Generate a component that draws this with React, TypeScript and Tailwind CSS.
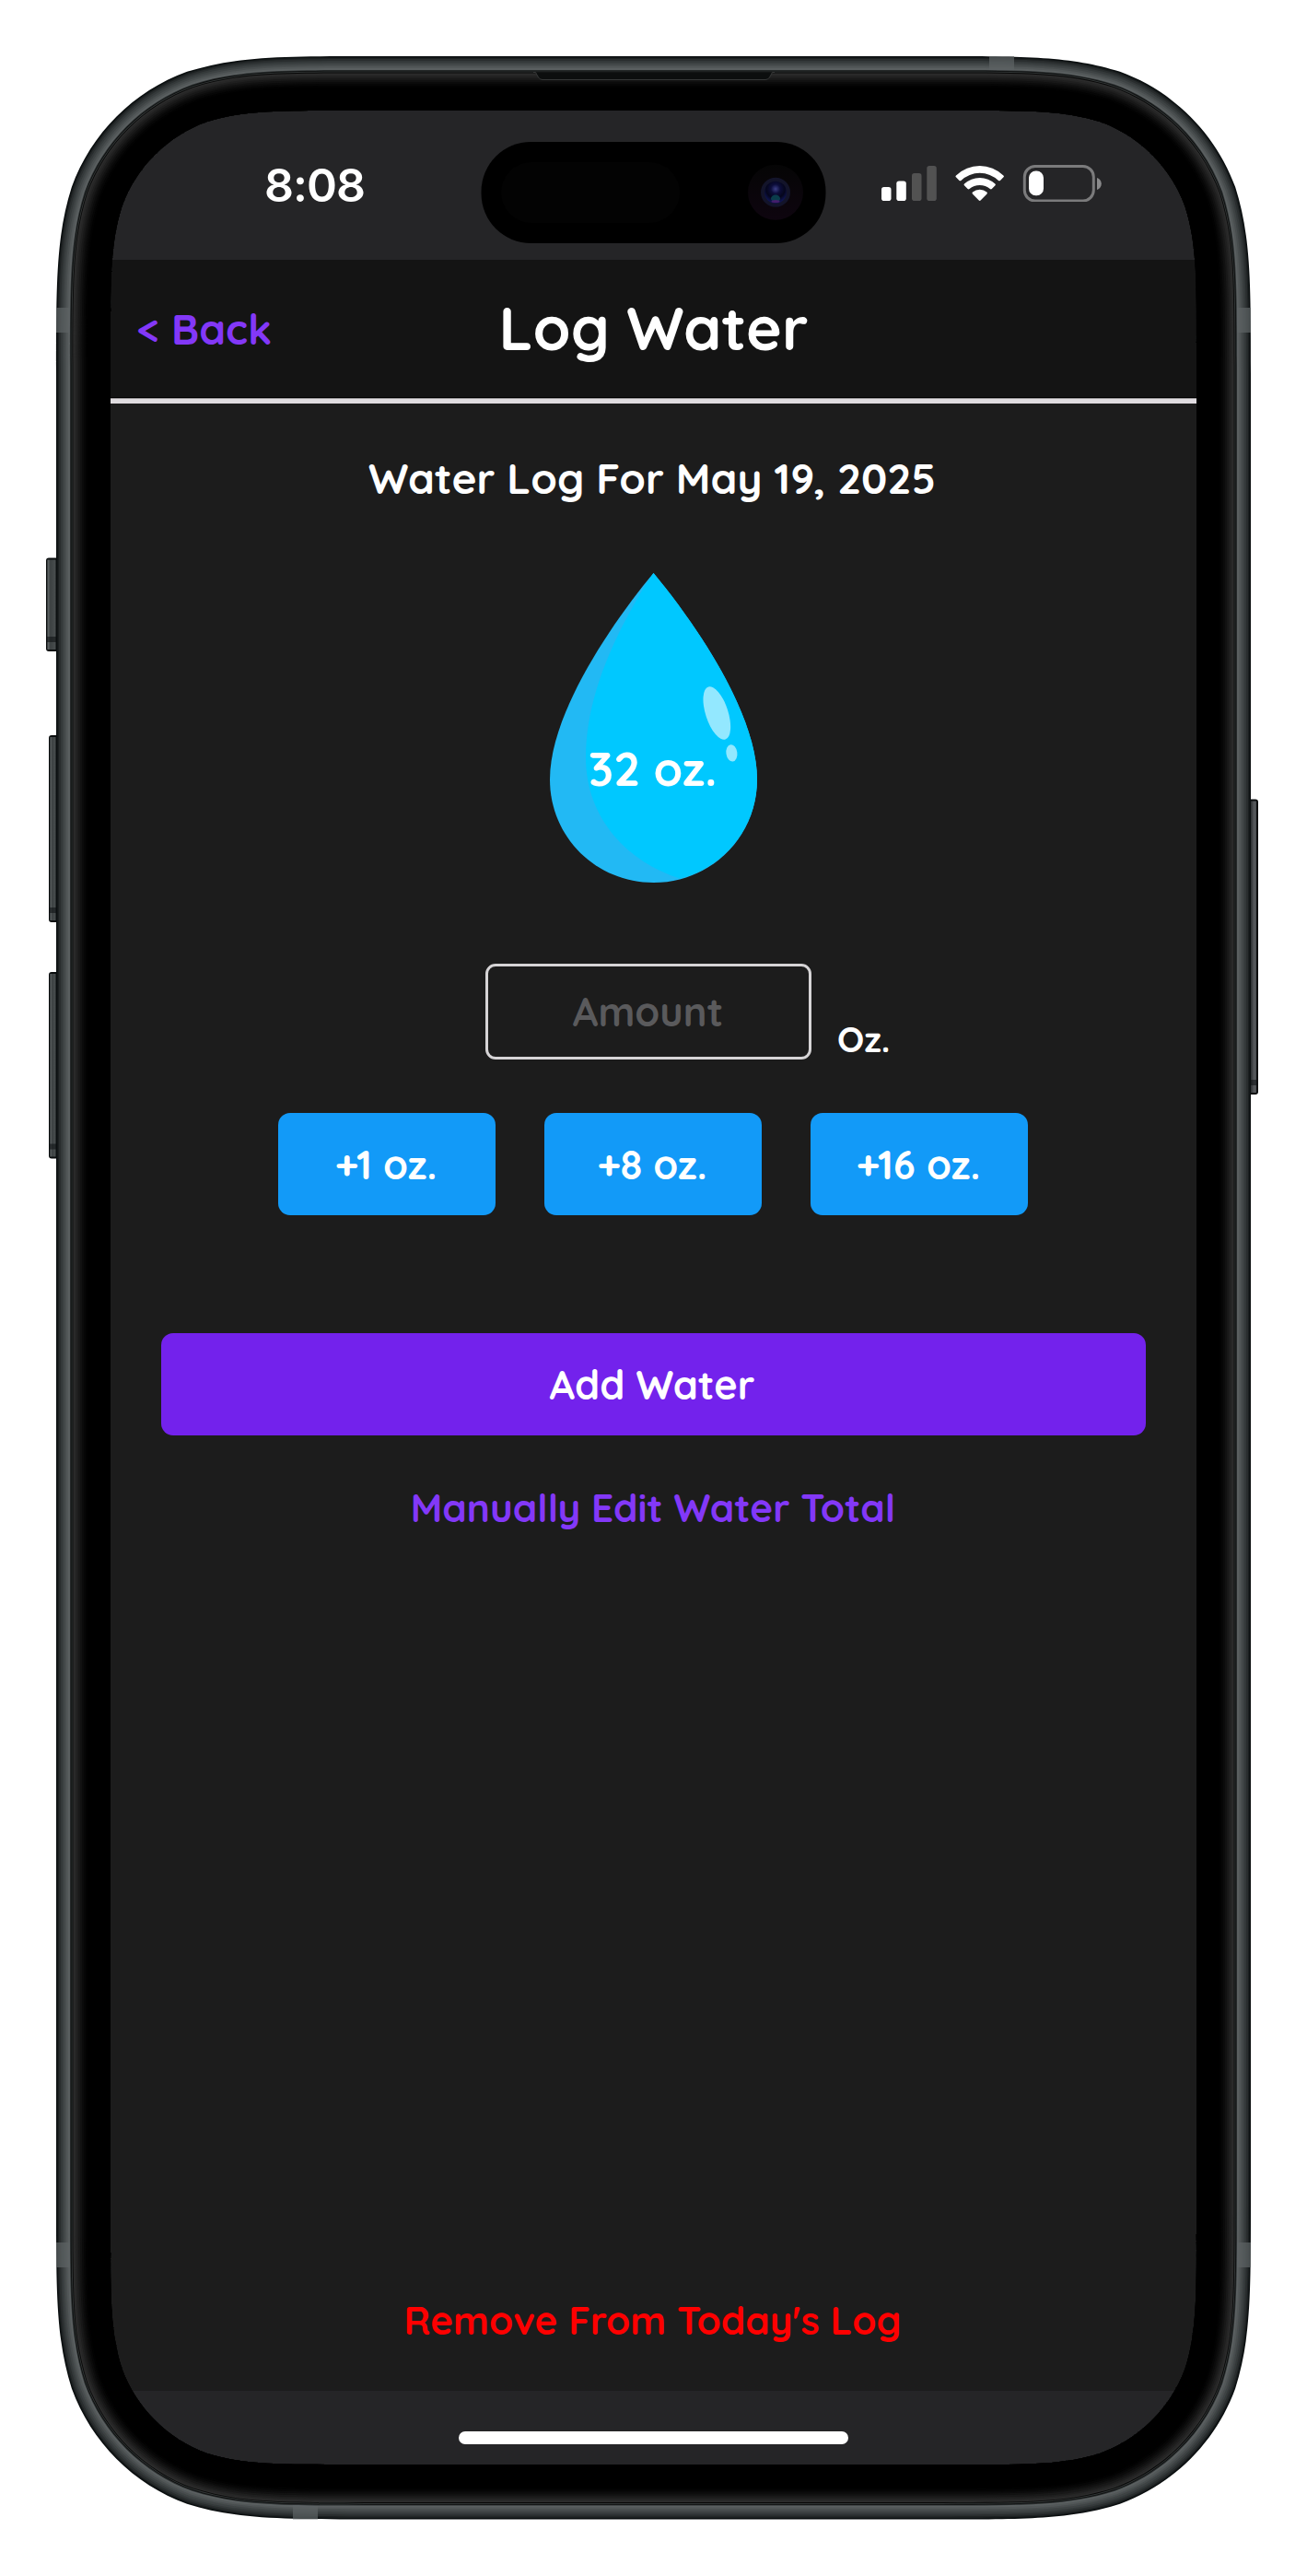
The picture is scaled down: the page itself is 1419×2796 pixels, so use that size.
// Rounded rectangle with continuous-curvature corners.
function squircle(l: number, t: number, r: number, b: number, rad: number): string {
  const e = 1.52866 * rad;
  const c1 = 1.08849 * rad;
  const c2 = 0.8684 * rad;
  const p = 0.63149 * rad;
  const q = 0.07491 * rad;
  const m = 0.37282 * rad;
  const n = 0.16906 * rad;
  return [
    `M${l + e} ${t}H${r - e}`,
    `C${r - c1} ${t} ${r - c2} ${t} ${r - p} ${t + q}`,
    `C${r - m} ${t + n} ${r - n} ${t + m} ${r - q} ${t + p}`,
    `C${r} ${t + c2} ${r} ${t + c1} ${r} ${t + e}`,
    `V${b - e}`,
    `C${r} ${b - c1} ${r} ${b - c2} ${r - q} ${b - p}`,
    `C${r - n} ${b - m} ${r - m} ${b - n} ${r - p} ${b - q}`,
    `C${r - c2} ${b} ${r - c1} ${b} ${r - e} ${b}`,
    `H${l + e}`,
    `C${l + c1} ${b} ${l + c2} ${b} ${l + p} ${b - q}`,
    `C${l + m} ${b - n} ${l + n} ${b - m} ${l + q} ${b - p}`,
    `C${l} ${b - c2} ${l} ${b - c1} ${l} ${b - e}`,
    `V${t + e}`,
    `C${l} ${t + c1} ${l} ${t + c2} ${l + q} ${t + p}`,
    `C${l + n} ${t + m} ${l + m} ${t + n} ${l + p} ${t + q}`,
    `C${l + c2} ${t} ${l + c1} ${t} ${l + e} ${t}Z`,
  ].join("");
}

const SCREEN_HOLE = squircle(120, 120, 1299, 2675, 165);

// Inset from the outer edge and the colour that starts there.
const METAL: [number, string][] = [
  [0, "#0b0f10"],
  [1.5, "#1c2021"],
  [3, "#292d2e"],
  [5, "#34393a"],
  [7, "#3e4344"],
  [9, "#484d4e"],
  [11, "#525758"],
  [13, "#5a5f60"],
];

const GLASS: [number, string][] = [
  [15, "#2c3031"],
  [15.8, "#0b0d0d"],
  [16.6, "#303434"],
  [17.6, "#070707"],
  [18.4, "#2c2c2c"],
  [20, "#262626"],
  [22, "#1f1f1f"],
  [24, "#181818"],
  [26, "#111111"],
  [28, "#0b0b0b"],
  [30, "#060606"],
  [32, "#020202"],
  [34, "#000000"],
];

const BANDS: [number, number, number, number][] = [
  [61, 334, 16, 27],
  [1342, 334, 16, 27],
  [61, 2434, 16, 27],
  [1342, 2434, 16, 27],
  [1074, 61, 27, 16.5],
  [318, 2718, 27, 16.5],
];

function Ring({ inset, color }: { inset: number; color: string }) {
  return (
    <path
      fillRule="evenodd"
      fill={color}
      d={squircle(61 + inset, 61 + inset, 1358 - inset, 2734.5 - inset, 225 - inset) + SCREEN_HOLE}
    />
  );
}

function SideButton({ x, y, w, h, right = false }: { x: number; y: number; w: number; h: number; right?: boolean }) {
  return (
    <g>
      <rect x={x} y={y} width={w + 4} height={h} rx="3" fill="#0a0d0e" />
      <rect x={right ? x + 4 : x + 1.5} y={y + 2} width={w - 2} height={h - 4} fill={right ? "url(#keyR)" : "url(#keyL)"} />
      <rect x={x + 1} y={y + h - 16} width={w + 2} height="6" fill="#0a0d0e" opacity="0.55" />
    </g>
  );
}

function DeviceFrame() {
  return (
    <svg className="pointer-events-none absolute inset-0" width="1419" height="2796" viewBox="0 0 1419 2796" aria-hidden="true">
      <defs>
        <linearGradient id="keyL">
          <stop offset="0" stopColor="#6a7071" />
          <stop offset="0.35" stopColor="#3c4142" />
          <stop offset="1" stopColor="#4a4f50" />
        </linearGradient>
        <linearGradient id="keyR">
          <stop offset="0" stopColor="#2c2f31" />
          <stop offset="0.6" stopColor="#56595c" />
          <stop offset="1" stopColor="#4a4d50" />
        </linearGradient>
        <radialGradient id="lens" cx="0.5" cy="0.35" r="0.6">
          <stop offset="0" stopColor="#3c3f86" />
          <stop offset="0.35" stopColor="#0c0d3a" />
          <stop offset="0.7" stopColor="#05061c" />
          <stop offset="1" stopColor="#0f1450" />
        </radialGradient>
        <linearGradient id="lensRing" x1="0" y1="0" x2="0" y2="1">
          <stop offset="0" stopColor="#050505" />
          <stop offset="1" stopColor="#0e050f" />
        </linearGradient>
      </defs>

      <SideButton x={50} y={605.5} w={11} h={101.5} />
      <SideButton x={53} y={798} w={8} h={203} />
      <SideButton x={53} y={1055} w={8} h={202.5} />
      <SideButton x={1354} y={867.5} w={8} h={320.5} right />

      {METAL.map(([inset, color]) => (
        <Ring key={inset} inset={inset} color={color} />
      ))}
      {BANDS.map(([x, y, w, h]) => (
        <rect key={`${x}-${y}`} x={x} y={y} width={w} height={h} fill="#5d6364" opacity="0.72" />
      ))}
      {GLASS.map(([inset, color]) => (
        <Ring key={inset} inset={inset} color={color} />
      ))}

      <path d="M579 78.5h2.500l3 5.500q1.500 2.500 4.500 2.500h242q3 0 4.500-2.500l3-5.500h2.500" fill="#0c0e0e" stroke="#363838" strokeWidth="1" />

      <rect x="522.5" y="154" width="374" height="110" rx="54" fill="#000" />
      <rect x="544" y="176" width="194" height="66" rx="33" fill="#030303" />
      <circle cx="842" cy="208.7" r="30" fill="url(#lensRing)" />
      <circle cx="842" cy="208.7" r="16" fill="#13142a" />
      <circle cx="842" cy="208.7" r="12" fill="url(#lens)" />
      <ellipse cx="842" cy="215.5" rx="5" ry="4" fill="#0b4a55" opacity="0.8" />
      <ellipse cx="842" cy="218.5" rx="4.5" ry="1.5" fill="#4a1c6e" opacity="0.9" />
    </svg>
  );
}

function StatusIcons() {
  return (
    <svg className="mt-[59px] mr-[102px] ml-auto" width="240" height="40" viewBox="957 179 240 40" aria-label="Signal, Wi-Fi and battery">
      <rect x="957" y="203" width="10.5" height="15" rx="2.8" fill="#fff" />
      <rect x="973.3" y="196.5" width="10.5" height="21.5" rx="2.8" fill="#fff" />
      <rect x="990" y="188" width="10.5" height="30" rx="2.8" fill="#525252" />
      <rect x="1006.3" y="180" width="10.5" height="38" rx="2.8" fill="#525252" />
      <g fill="#fff">
        <path d="M1038 190.5a37 37 0 0 1 51.4 0q1 .9.1 1.8l-3.6 3.6q-.9.9-1.9 0a29.500 29.500 0 0 0-40.6 0q-1 .9-1.9 0l-3.6-3.6q-.9-.9.1-1.8z" />
        <path d="M1047 199.5a24.500 24.500 0 0 1 33.4 0q1 .9.1 1.800l-3.700 3.700q-.9.9-1.900.1a17 17 0 0 0-22.400 0q-1 .8-1.900-.1l-3.700-3.700q-.9-.9.1-1.800z" />
        <path d="M1056 208.6a12 12 0 0 1 15.4 0q1 .8.1 1.800l-6.900 7.100q-.9.9-1.800 0l-6.900-7.100q-.9-1 .1-1.800z" />
      </g>
      <rect x="1112.3" y="180.5" width="75" height="37.5" rx="11.5" fill="none" stroke="#7b7b7c" strokeWidth="3" />
      <rect x="1117" y="185.5" width="16" height="26.7" rx="7.5" fill="#fff" />
      <path d="M1191 193c3 1.200 4.800 3.500 4.800 6.500s-1.800 5.300-4.800 6.500z" fill="#8a8a8b" />
    </svg>
  );
}

function WaterDrop({ label }: { label: string }) {
  return (
    <div className="mt-[73px] grid h-[336px] w-[225px] place-items-center">
      <svg className="col-start-1 row-start-1" width="225" height="336" viewBox="597 622 225 336" aria-hidden="true">
        <path
          d="M709.5 622C756 678 822 775 822 846C822 909 771.5 958 709.5 958S597 909 597 846C597 775 663 678 709.5 622Z"
          fill="#22b9f4"
        />
        <path
          d="M709.5 622C756 678 822 775 822 846C822 899 785 942 738 953.5C683 936 636 890 636 822C636 755 668 690 697 641Q703 631 709.5 622Z"
          fill="#00c8ff"
        />
        <ellipse cx="778.3" cy="774" rx="12.2" ry="30" transform="rotate(-18 778.3 774)" fill="#93e8ff" />
        <ellipse cx="794.4" cy="817.4" rx="6" ry="9.2" transform="rotate(-8 794.4 817.4)" fill="#93e8ff" />
      </svg>
      <span className="col-start-1 row-start-1 pt-[88px] pr-[2px] text-[51px] leading-[60px] whitespace-nowrap text-white">{label}</span>
    </div>
  );
}

const QUICK_ADD = ["+1 oz.", "+8 oz.", "+16 oz."];

export default function App() {
  return (
    <div className="relative h-[2796px] w-[1419px] overflow-hidden bg-white pt-[120px] pl-[120px] font-['Quicksand','Nunito','Lato',sans-serif] font-bold">
      <div className="flex h-[2555px] w-[1179px] flex-col overflow-hidden rounded-[130px] bg-[#1c1c1c]">
        <div className="flex h-[162px] shrink-0 items-start bg-[#252527]">
          <span className="mt-[51px] ml-[167px] font-['Inter',sans-serif] text-[50px] leading-[60px] font-semibold tracking-[-1px] text-white">8:08</span>
          <StatusIcons />
        </div>

        <header className="grid h-[150px] shrink-0 grid-cols-3 items-center border-b border-black bg-[#141414] px-[29px]">
          <button className="justify-self-start text-[46px] leading-[60px] whitespace-nowrap text-[#8338f8]">&lt; Back</button>
          <h1 className="mb-[2px] justify-self-center text-[66px] leading-[80px] whitespace-nowrap text-white">Log Water</h1>
        </header>
        <div className="h-[6px] shrink-0 border-t border-[#9a9799] bg-[#e0dce0]" />

        <main className="flex flex-1 flex-col items-center">
          <h2 className="mt-[51px] pr-[3px] text-[46px] leading-[60px] whitespace-nowrap text-white">Water Log For May 19, 2025</h2>

          <WaterDrop label="32 oz." />

          <div className="mt-[88px] flex h-[104px] items-end gap-[28px] self-start pl-[407px]">
            <input
              className="h-[104px] w-[354px] rounded-[11px] border-[3px] border-[#d6d4d6] bg-transparent pr-[1px] text-center text-[43.3px] text-white outline-none placeholder:text-[#5a5a5c] placeholder:opacity-100"
              placeholder="Amount"
            />
            <span className="text-[38.5px] leading-[45px] text-white">Oz.</span>
          </div>

          <div className="mt-[58px] flex gap-[53px] pr-px">
            {QUICK_ADD.map((label) => (
              <button key={label} className="h-[111px] w-[236px] rounded-[13px] bg-[#129af8] pr-[2px] text-[43.3px] leading-[60px] text-white">
                {label}
              </button>
            ))}
          </div>

          <button className="mt-[128px] h-[111px] w-[1069px] rounded-[13px] bg-[#7322ec] pr-[3px] text-[43.2px] leading-[60px] text-white">Add Water</button>
          <button className="mt-[49px] pr-px text-[42.2px] leading-[60px] text-[#8338f8]">Manually Edit Water Total</button>
          <button className="mt-auto mb-[46px] pr-[2px] text-[42.2px] leading-[60px] text-[#ff0000]">Remove From Today's Log</button>
        </main>

        <footer className="flex h-[80px] shrink-0 justify-center bg-[#252527] pt-[44px]">
          <div className="h-[14px] w-[423px] rounded-full bg-white" />
        </footer>
      </div>

      <DeviceFrame />
    </div>
  );
}
